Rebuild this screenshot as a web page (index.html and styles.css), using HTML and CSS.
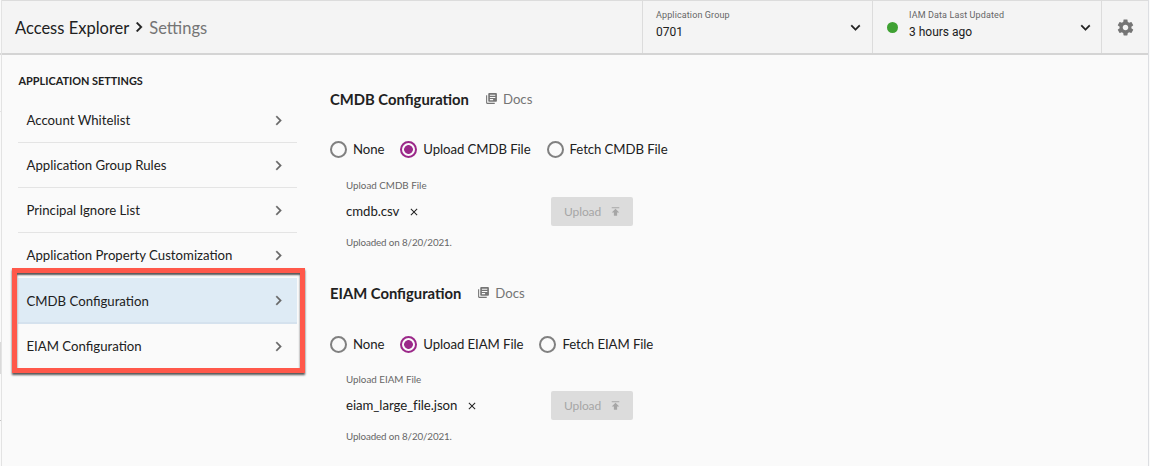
FILE: index.html
```html
<!DOCTYPE html>
<html lang="en">
<head>
    <meta charset="UTF-8">
    <meta name="viewport" content="width=device-width, initial-scale=1.0">
    <title>Access Explorer - Settings</title>
    <link rel="stylesheet" href="styles.css">
</head>
<body>
    <!-- Shared icons -->
    <svg class="sprite" width="0" height="0">
        <symbol id="chevron" viewBox="0 0 24 24"><path d="M10 6L8.59 7.41 13.17 12l-4.58 4.59L10 18l6-6z"/></symbol>
        <symbol id="docs" viewBox="0 0 24 24"><path d="M4 6H2v14c0 1.1.9 2 2 2h14v-2H4V6zm16-4H8c-1.1 0-2 .9-2 2v12c0 1.1.9 2 2 2h12c1.1 0 2-.9 2-2V4c0-1.1-.9-2-2-2zm-1 9H9V9h10v2zm-4 4H9v-2h6v2zm4-8H9V5h10v2z"/></symbol>
        <symbol id="publish" viewBox="0 0 24 24"><path d="M5 4v2h14V4H5zm0 10h4v6h6v-6h4l-7-7-7 7z"/></symbol>
        <symbol id="close" viewBox="0 0 24 24"><path d="M19 6.41L17.59 5 12 10.59 6.41 5 5 6.41 10.59 12 5 17.59 6.41 19 12 13.41 17.59 19 19 17.59 13.41 12z"/></symbol>
    </svg>

    <div class="app">
        <header class="topbar">
            <div class="breadcrumb">
                <span>Access Explorer</span>
                <svg class="crumb-arrow"><use href="#chevron"/></svg>
                <span class="crumb-current">Settings</span>
            </div>
            <div class="picker picker-group">
                <div class="picker-text">
                    <div class="picker-label">Application Group</div>
                    <div class="picker-value">0701</div>
                </div>
                <svg class="picker-arrow"><use href="#chevron"/></svg>
            </div>
            <div class="picker picker-updated">
                <span class="status-dot"></span>
                <div class="picker-text">
                    <div class="picker-label">IAM Data Last Updated</div>
                    <div class="picker-value">3 hours ago</div>
                </div>
                <svg class="picker-arrow"><use href="#chevron"/></svg>
            </div>
            <div class="gear">
                <svg class="gear-icon" viewBox="0 0 24 24"><path d="M19.43 12.98c.04-.32.07-.64.07-.98s-.03-.66-.07-.98l2.11-1.65c.19-.15.24-.42.12-.64l-2-3.46c-.12-.22-.39-.3-.61-.22l-2.49 1c-.52-.4-1.08-.73-1.69-.98l-.38-2.65C14.46 2.18 14.25 2 14 2h-4c-.25 0-.46.18-.49.42l-.38 2.65c-.61.25-1.17.59-1.69.98l-2.49-1c-.23-.09-.49 0-.61.22l-2 3.46c-.13.22-.07.49.12.64l2.11 1.65c-.04.32-.07.65-.07.98s.03.66.07.98l-2.11 1.65c-.19.15-.24.42-.12.64l2 3.46c.12.22.39.3.61.22l2.49-1c.52.4 1.08.73 1.69.98l.38 2.65c.03.24.24.42.49.42h4c.25 0 .46-.18.49-.42l.38-2.65c.61-.25 1.17-.59 1.69-.98l2.49 1c.23.09.49 0 .61-.22l2-3.46c.12-.22.07-.49-.12-.64l-2.11-1.65zM12 15.5c-1.93 0-3.5-1.57-3.5-3.5s1.57-3.5 3.5-3.5 3.5 1.57 3.5 3.5-1.57 3.5-3.5 3.5z"/></svg>
            </div>
        </header>

        <div class="content">
            <nav class="sidebar">
                <h2 class="sidebar-title">APPLICATION SETTINGS</h2>
                <div class="nav-item"><span>Account Whitelist</span><svg class="nav-arrow"><use href="#chevron"/></svg></div>
                <div class="nav-item"><span>Application Group Rules</span><svg class="nav-arrow"><use href="#chevron"/></svg></div>
                <div class="nav-item"><span>Principal Ignore List</span><svg class="nav-arrow"><use href="#chevron"/></svg></div>
                <div class="nav-item last-plain"><span>Application Property Customization</span><svg class="nav-arrow"><use href="#chevron"/></svg></div>
                <div class="highlighted">
                    <div class="nav-item active"><span>CMDB Configuration</span><svg class="nav-arrow"><use href="#chevron"/></svg></div>
                    <div class="nav-item last"><span>EIAM Configuration</span><svg class="nav-arrow"><use href="#chevron"/></svg></div>
                    <div class="callout"></div>
                </div>
            </nav>

            <main class="main">
                <section class="config">
                    <div class="config-head">
                        <h3>CMDB Configuration</h3>
                        <a class="docs"><svg class="docs-icon"><use href="#docs"/></svg>Docs</a>
                    </div>
                    <div class="radios">
                        <label class="option"><span class="radio"></span>None</label>
                        <label class="option"><span class="radio checked"></span>Upload CMDB File</label>
                        <label class="option"><span class="radio"></span>Fetch CMDB File</label>
                    </div>
                    <div class="upload">
                        <div class="hint">Upload CMDB File</div>
                        <div class="file-row">
                            <div class="file">cmdb.csv<svg class="remove"><use href="#close"/></svg></div>
                            <button class="upload-btn" disabled>Upload<svg class="upload-icon"><use href="#publish"/></svg></button>
                        </div>
                        <div class="hint uploaded">Uploaded on 8/20/2021.</div>
                    </div>
                </section>

                <section class="config">
                    <div class="config-head">
                        <h3>EIAM Configuration</h3>
                        <a class="docs"><svg class="docs-icon"><use href="#docs"/></svg>Docs</a>
                    </div>
                    <div class="radios">
                        <label class="option"><span class="radio"></span>None</label>
                        <label class="option"><span class="radio checked"></span>Upload EIAM File</label>
                        <label class="option"><span class="radio"></span>Fetch EIAM File</label>
                    </div>
                    <div class="upload">
                        <div class="hint">Upload EIAM File</div>
                        <div class="file-row">
                            <div class="file">eiam_large_file.json<svg class="remove"><use href="#close"/></svg></div>
                            <button class="upload-btn" disabled>Upload<svg class="upload-icon"><use href="#publish"/></svg></button>
                        </div>
                        <div class="hint uploaded">Uploaded on 8/20/2021.</div>
                    </div>
                </section>
            </main>
        </div>
    </div>
</body>
</html>
```
FILE: styles.css
```css
* {
    box-sizing: border-box;
}

body {
    margin: 0;
    height: 466px;
    overflow: hidden;
    background-color: #fafafa;
    /* Edge of the collapsed side menu: dividers and its selected entry */
    background-image:
        linear-gradient(#d8d8d8, #d8d8d8),
        linear-gradient(#e4e4e4, #e4e4e4),
        linear-gradient(#dadada, #dadada),
        linear-gradient(#c4c4c4, #c4c4c4);
    background-size: 1px 2px, 1px 1px, 1px 32px, 1px 1px;
    background-position: 0 53px, 0 111px, 0 342px, 0 420px;
    background-repeat: no-repeat;
    color: #212121;
    font-family: Lato, sans-serif;
    font-size: 13.2px;
    line-height: 18px;
}

svg {
    fill: currentColor;
    flex: none;
}

.sprite {
    display: none;
}

.app {
    height: 466px;
    margin: 0 1px;
    border-left: 1px solid #e3e3e3;
    border-right: 1px solid #dcdee2;
}

/* Top bar */
.topbar {
    display: flex;
    height: 55px;
    background-color: #f4f4f4;
    border-top: 1px solid #dcdcdc;
    border-bottom: 2px solid #d4d4d4;
}

.breadcrumb {
    flex: 1;
    display: flex;
    align-items: center;
    padding-left: 13px;
    padding-top: 2px;
    font-size: 16.5px;
}

.crumb-arrow {
    width: 20px;
    height: 20px;
    margin: -3px 0 0 0;
    stroke: currentColor;
    stroke-width: 0.3;
}

.crumb-current {
    color: #757575;
}

.picker {
    display: flex;
    border-left: 1px solid #dcdcdc;
    font-family: Roboto, sans-serif;
}

.picker-group {
    width: 230px;
    padding: 6px 8px 0 13px;
}

.picker-updated {
    width: 229px;
    padding: 6px 7px 0 14px;
}

.picker-text {
    flex: 1;
}

.picker-label {
    color: #666;
    font-size: 9px;
    line-height: 16px;
    letter-spacing: 0.12px;
}

.picker-value {
    font-size: 12px;
    line-height: 18px;
}

.picker-arrow {
    width: 19px;
    height: 19px;
    margin-top: 11px;
    margin-right: -1px;
    transform: rotate(90deg);
    stroke: currentColor;
    stroke-width: 0.3;
}

.status-dot {
    width: 11px;
    height: 11px;
    margin: 15px 11px 0 0;
    border-radius: 50%;
    background-color: #3fa133;
}

.gear {
    width: 47px;
    display: flex;
    align-items: center;
    justify-content: center;
    border-left: 1px solid #dcdcdc;
    color: #757575;
}

.gear-icon {
    width: 19px;
    height: 19px;
}

/* Sidebar */
.content {
    display: flex;
}

.sidebar {
    width: 279px;
    margin-left: 16px;
}

.sidebar-title {
    margin: 17px 0 8px;
    padding-left: 0.5px;
    font-size: 10.9px;
    font-weight: 700;
    line-height: 18px;
}

.nav-item {
    display: flex;
    align-items: center;
    justify-content: space-between;
    height: 45px;
    padding: 0 9px 0 8.5px;
    border-bottom: 1px solid #e4e4e4;
}

.nav-item.last-plain,
.nav-item.last {
    border-bottom-color: transparent;
}

.nav-item.active {
    height: 46px;
    background-color: #deebf5;
    border-bottom: 2px solid #d5e2ee;
}

.nav-item.active span {
    padding-top: 2px;
}

.nav-arrow {
    width: 19px;
    height: 19px;
    color: #686868;
    stroke: currentColor;
    stroke-width: 0.3;
}

.highlighted {
    position: relative;
}

/* Red frame lying over the two highlighted entries */
.callout {
    position: absolute;
    left: -6px;
    top: -10px;
    width: 293px;
    height: 105px;
    border: 5px solid #ff584a;
    box-shadow: 0 2px 2px #555, inset 0 2px 2px #555;
}

/* Configuration sections */
.main {
    margin-left: 33px;
    padding-top: 34px;
}

.config {
    height: 194px;
}

.config-head {
    display: flex;
    align-items: center;
    height: 20px;
}

.config-head h3 {
    margin: 0;
    font-size: 14.8px;
    font-weight: 700;
}

.docs {
    display: flex;
    align-items: center;
    gap: 5px;
    margin-left: 16px;
    color: #757575;
}

.docs-icon {
    width: 13px;
    height: 13px;
    margin-top: -2px;
}

.radios {
    display: flex;
    gap: 16px;
    margin-top: 31px;
    height: 18px;
}

.config + .config .radios {
    margin-top: 32px;
}

.config + .config .upload {
    padding-top: 17px;
}

.option {
    display: flex;
    align-items: center;
    gap: 6px;
    letter-spacing: -0.08px;
}

.radio {
    width: 17px;
    height: 17px;
    border: 2px solid #808080;
    border-radius: 50%;
}

.radio.checked {
    border: 2px solid #9b2889;
    background: radial-gradient(circle, #9b2889 4px, transparent 4.7px);
}

.upload {
    padding: 18px 0 0 16px;
}

.hint {
    color: #666;
    font-size: 9.8px;
    line-height: 18px;
}

.uploaded {
    letter-spacing: -0.12px;
}

.file-row {
    display: flex;
    align-items: center;
    height: 30px;
    margin: 2px 0 7px;
}

.file {
    display: flex;
    align-items: center;
    width: 205px;
    letter-spacing: -0.05px;
}

.remove {
    width: 12px;
    height: 12px;
    margin: 1px 0 0 9px;
}

.upload-btn {
    display: flex;
    align-items: center;
    gap: 8px;
    width: 82px;
    height: 29px;
    padding: 0 0 0 13px;
    border: none;
    border-radius: 2px;
    background-color: #dcdcdc;
    color: #a6a6a6;
    font-family: inherit;
    font-size: 12px;
    letter-spacing: -0.1px;
}

.upload-icon {
    width: 13px;
    height: 13px;
}
```
